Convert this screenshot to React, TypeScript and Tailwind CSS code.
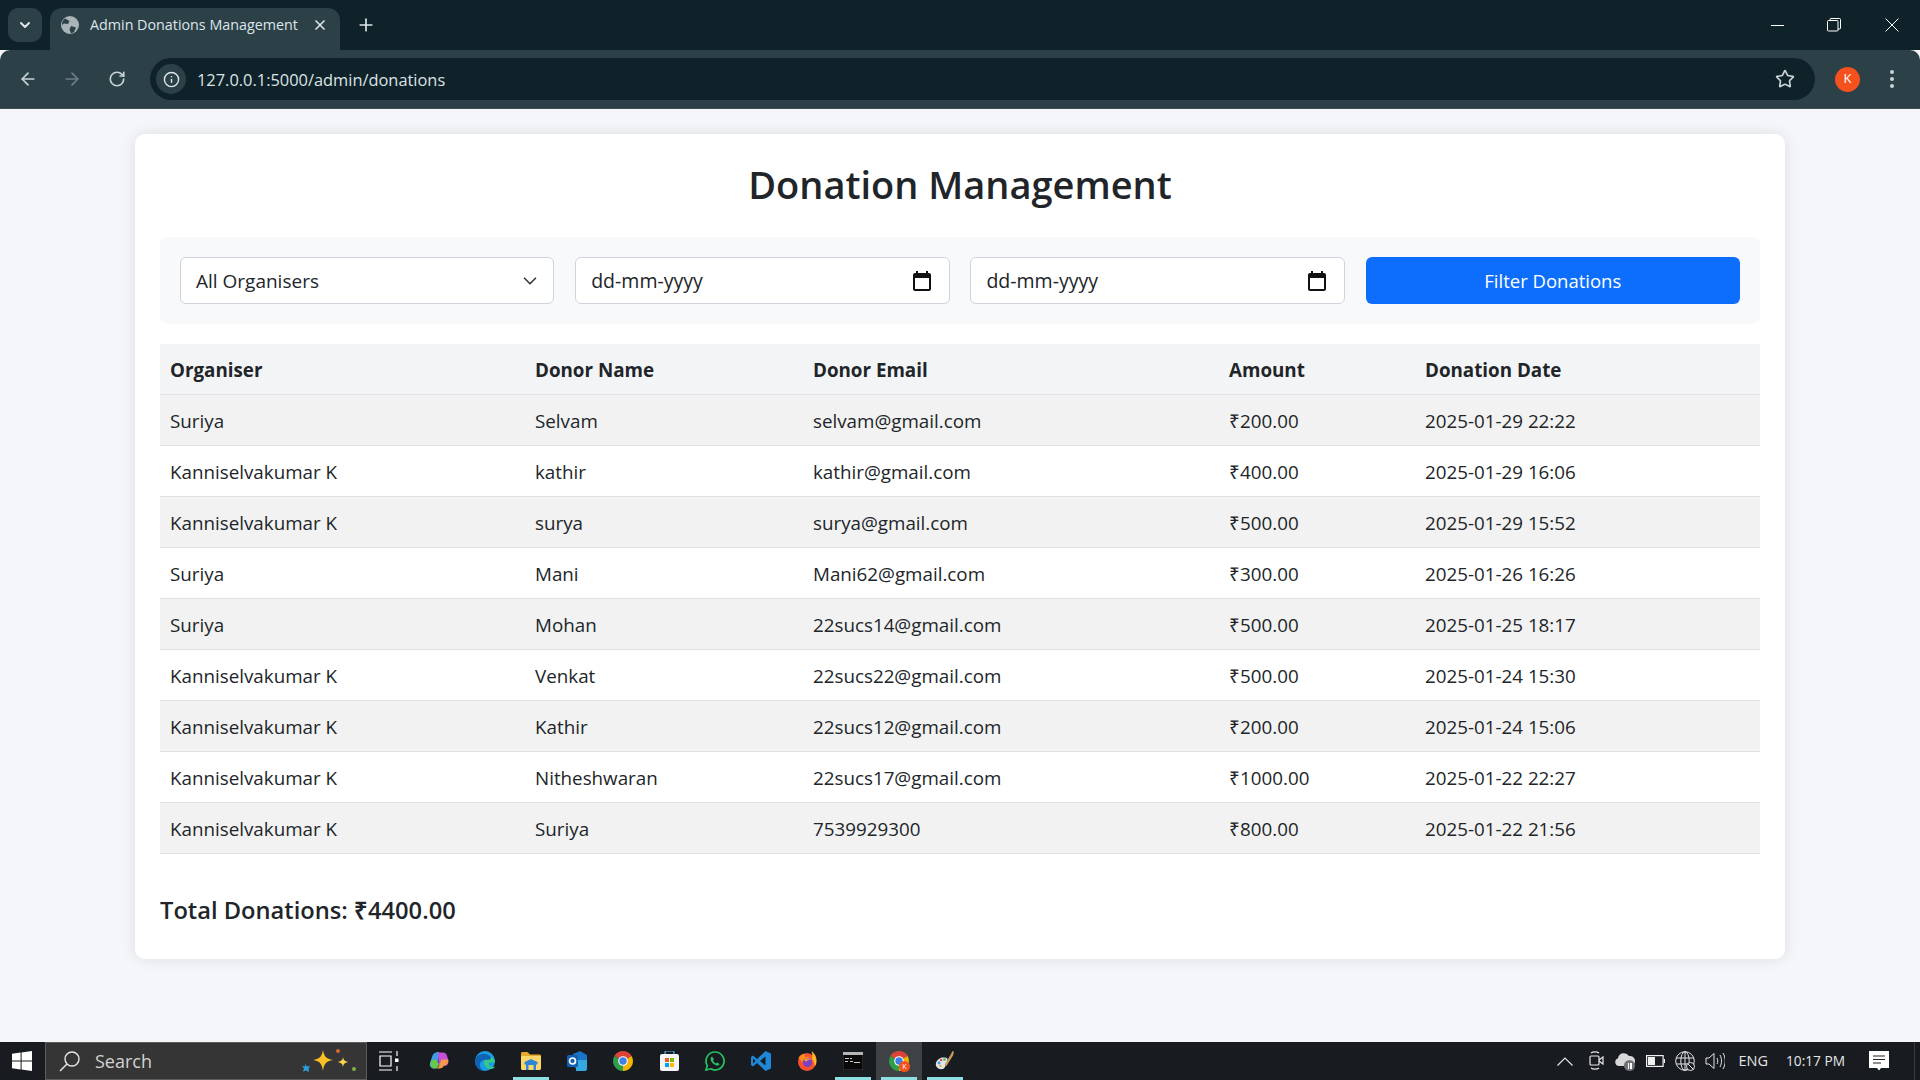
import { ArrowLeft, ArrowRight, ChevronDown, Info, Plus, RotateCw, Star, X } from 'lucide-react'

const donations = [
  ['Suriya', 'Selvam', 'selvam@gmail.com', '₹200.00', '2025-01-29 22:22'],
  ['Kanniselvakumar K', 'kathir', 'kathir@gmail.com', '₹400.00', '2025-01-29 16:06'],
  ['Kanniselvakumar K', 'surya', 'surya@gmail.com', '₹500.00', '2025-01-29 15:52'],
  ['Suriya', 'Mani', 'Mani62@gmail.com', '₹300.00', '2025-01-26 16:26'],
  ['Suriya', 'Mohan', '22sucs14@gmail.com', '₹500.00', '2025-01-25 18:17'],
  ['Kanniselvakumar K', 'Venkat', '22sucs22@gmail.com', '₹500.00', '2025-01-24 15:30'],
  ['Kanniselvakumar K', 'Kathir', '22sucs12@gmail.com', '₹200.00', '2025-01-24 15:06'],
  ['Kanniselvakumar K', 'Nitheshwaran', '22sucs17@gmail.com', '₹1000.00', '2025-01-22 22:27'],
  ['Kanniselvakumar K', 'Suriya', '7539929300', '₹800.00', '2025-01-22 21:56'],
]

function CalendarIcon() {
  return (
    <svg width="24" height="24" viewBox="0 0 24 24" fill="#111">
      <path d="M19 4h-1V2h-2v2H8V2H6v2H5C3.900 4 3 4.900 3 6v14c0 1.100.9 2 2 2h14c1.100 0 2-.9 2-2V6c0-1.100-.9-2-2-2zm0 16H5V9h14v11z" />
    </svg>
  )
}

function DateField() {
  return (
    <div className="h-[47px] flex items-center justify-between pl-[15px] pr-[15px] bg-white border border-[#ced4da] rounded-md text-[19.500px] text-[#212529]">
      <span>dd-mm-yyyy</span>
      <CalendarIcon />
    </div>
  )
}

function ChromeLogo() {
  return (
    <svg width="20" height="20" viewBox="0 0 20 20">
      <path d="M10 10 1.340 5A10 10 0 0 1 18.660 5z" fill="#dc4437" />
      <path d="M10 10 18.660 5A10 10 0 0 1 10 20z" fill="#f4b400" />
      <path d="M10 10V20A10 10 0 0 1 1.340 5z" fill="#2f9e48" />
      <circle cx="10" cy="10" r="4.800" fill="#fff" />
      <circle cx="10" cy="10" r="3.700" fill="#3f7fe8" />
    </svg>
  )
}

function TaskIcon({ active, open, children }: { active?: boolean; open?: boolean; children: React.ReactNode }) {
  return (
    <div className={`relative w-[46px] h-[38px] flex items-center justify-center ${active ? 'bg-[#3f4245]' : ''}`}>
      {children}
      {open && <div className="absolute bottom-0 left-[5px] right-[5px] h-[3px] bg-[#8fdfe2]" />}
    </div>
  )
}

export default function App() {
  return (
    <div className="h-screen flex flex-col overflow-hidden bg-[#f4f6fa] font-['Open_Sans',sans-serif] text-[#212529]">
      {/* browser chrome */}
      <div className="h-[50px] shrink-0 bg-[#0f2229] flex items-end">
        <div className="ml-[8px] mb-[8px] w-[34px] h-[34px] bg-[#2c4048] rounded-[10px] flex items-center justify-center">
          <ChevronDown size={16} strokeWidth={3} color="#dfe6e8" />
        </div>
        <div className="ml-[8px] w-[290px] h-[42px] bg-[#2c4048] rounded-t-[12px] flex items-center pl-[11px] pr-[12px] pb-[8px] text-[#dde5e8] text-[14.300px]">
          <svg width="18" height="18" viewBox="0 0 18 18" className="shrink-0">
            <circle cx="9" cy="9" r="9" fill="#a9b4b9" />
            <path d="M4 2.500 8.500 5 7 8 3 7.500 1 9a8 8 0 0 1 3-6.500zM10 10l5 1.500L13 16l-3 1.500-1.500-4z" fill="#2c4048" />
          </svg>
          <span className="ml-[11px] flex-1 whitespace-nowrap">Admin Donations Management</span>
          <X size={16} strokeWidth={2.500} color="#dfe6e8" />
        </div>
        <div className="ml-[16px] mb-[15px] w-[20px] h-[20px]">
          <Plus size={20} strokeWidth={2} color="#dfe6e8" />
        </div>
        <div className="ml-auto mb-[8px] h-[34px] flex items-center text-white">
          <div className="w-[13px] h-[1px] bg-white" />
          <svg width="14" height="14" viewBox="0 0 14 14" fill="none" stroke="#fff" className="ml-[43px]">
            <rect x="0.500" y="2.500" width="10.500" height="10.500" rx="1" />
            <path d="M3 2.500V1.500a1 1 0 0 1 1-1h8.500a1 1 0 0 1 1 1V10a1 1 0 0 1-1 1H11" />
          </svg>
          <svg width="14" height="14" viewBox="0 0 14 14" stroke="#fff" className="ml-[44px] mr-[21px]">
            <path d="M.5.500 13.500 13.500M13.500.500.5 13.500" />
          </svg>
        </div>
      </div>
      <div className="h-[59px] shrink-0 bg-[#2c4048] border-b border-[#3f4c52] rounded-t-[10px] flex items-center">
        <ArrowLeft size={20} strokeWidth={2} color="#c9d3d7" className="ml-[18px]" />
        <ArrowRight size={20} strokeWidth={2} color="#6f7f86" className="ml-[24px]" />
        <RotateCw size={18} strokeWidth={2.200} color="#c9d3d7" className="ml-[26px]" />
        <div className="ml-[24px] w-[1665px] h-[42px] bg-[#0f2229] rounded-full flex items-center pl-[6px]">
          <div className="w-[30px] h-[30px] rounded-full bg-[#2c4048] flex items-center justify-center">
            <Info size={17} strokeWidth={2} color="#dfe6e8" />
          </div>
          <span className="ml-[11px] mt-[3px] text-[16.400px] text-[#dbe3e6]">127.0.0.1:5000/admin/donations</span>
          <Star size={20} strokeWidth={2} color="#c9d3d7" className="ml-auto mr-[20px]" />
        </div>
        <div className="ml-[20px] w-[25px] h-[25px] rounded-full bg-[#f4511e] text-white text-[13px] flex items-center justify-center">K</div>
        <svg width="4" height="18" viewBox="0 0 4 18" fill="#c9d3d7" className="ml-[30px]">
          <circle cx="2" cy="2" r="2" />
          <circle cx="2" cy="9" r="2" />
          <circle cx="2" cy="16" r="2" />
        </svg>
      </div>

      {/* page */}
      <div className="flex-1 min-h-0 pt-[25px] px-[135px]">
        <div className="bg-white rounded-[10px] shadow-[0_0_15px_rgba(0,0,0,0.1)] h-[825px] p-[25px]">
          <h1 className="text-[38px] leading-[52px] font-semibold text-center mb-[27px] -mt-[1px]">Donation Management</h1>

          <div className="bg-[#f8f9fa] rounded-lg p-[20px] mt-[1px] grid grid-cols-4 gap-[20.800px]">
            <div className="h-[47px] flex items-center justify-between pl-[15px] pr-[12px] bg-white border border-[#ced4da] rounded-md text-[19px]">
              <span className="pt-[2px]">All Organisers</span>
              <ChevronDown size={22} strokeWidth={1.800} color="#343a40" />
            </div>
            <DateField />
            <DateField />
            <button className="h-[47px] bg-[#0d6efd] text-white rounded-md text-[18.500px]">Filter Donations</button>
          </div>

          <table className="w-full table-fixed mt-[20px] border-collapse text-[18.800px]">
            <colgroup>
              <col className="w-[365px]" />
              <col className="w-[278px]" />
              <col className="w-[416px]" />
              <col className="w-[196px]" />
              <col />
            </colgroup>
            <thead>
              <tr className="h-[50px] bg-[#f3f4f5] border-b border-[#dee2e6]">
                {['Organiser', 'Donor Name', 'Donor Email', 'Amount', 'Donation Date'].map((h) => (
                  <th key={h} className="px-[10px] pt-[2px] text-left font-bold">{h}</th>
                ))}
              </tr>
            </thead>
            <tbody>
              {donations.map((row, i) => (
                <tr key={i} className={`h-[51px] border-b border-[#dee2e6] ${i % 2 === 0 ? 'bg-[#f2f2f2]' : 'bg-white'}`}>
                  {row.map((cell, j) => (
                    <td key={j} className="px-[10px] pt-[3px] whitespace-nowrap">{cell}</td>
                  ))}
                </tr>
              ))}
            </tbody>
          </table>

          <h4 className="mt-[38px] text-[23.700px] leading-[36px] font-semibold">Total Donations: ₹4400.00</h4>
        </div>
      </div>

      {/* taskbar */}
      <div className="h-[38px] shrink-0 bg-[#181b1f] flex items-center text-[#e4e6e8]">
        <div className="w-[45px] h-full flex items-center justify-center pr-[2px]">
          <svg width="20" height="20" viewBox="0 0 20 20" fill="#fff">
            <path d="M0 2.800 8.600 1.600V9.500H0zM9.600 1.400 20 0V9.500H9.600zM0 10.500H8.600V18.400L0 17.200zM9.600 10.500H20V20L9.600 18.600z" />
          </svg>
        </div>
        <div className="w-[322px] h-full bg-[#353535] border border-[#5c5c5c] flex items-center pl-[13px]">
          <svg width="21" height="21" viewBox="0 0 21 21" fill="none" stroke="#e8e8e8" strokeWidth="1.400">
            <circle cx="13" cy="8" r="7" />
            <path d="M8 13 1 20" />
          </svg>
          <span className="ml-[15px] text-[18px] text-[#d2d2d2]">Search</span>
          <svg width="58" height="26" viewBox="0 0 58 26" className="ml-auto mr-[9px]">
            <path d="M24 2c1 6 3 9 10 10-7 1-9 4-10 11-1-7-3-10-10-11 7-1 9-4 10-10z" fill="#fbbf24" />
            <path d="M44 9c.5 3 1.500 4 5 5-3.500 1-4.500 2-5 5-.5-3-1.500-4-5-5 3.500-1 4.500-2 5-5z" fill="#fcd34d" />
            <path d="M6 16l2 2.500 3-.5-1.500 3 .5 3-3-1.500-3 1 1-3-2-2.500 3 .5z" fill="#2b9fe0" />
            <circle cx="39" cy="3" r="2" fill="#d9662e" />
            <circle cx="55" cy="21" r="2" fill="#7cb342" />
          </svg>
        </div>
        <div className="w-[49px] h-full flex items-center justify-center pr-[5px]">
          <svg width="20" height="20" viewBox="0 0 20 20" fill="none" stroke="#fff" strokeWidth="1.200">
            <path d="M0 1H13M0 19H13M1 5H12V15H1zM18 0V5M18 15V20" />
            <rect x="16" y="7.500" width="3.500" height="3.500" fill="#fff" stroke="none" />
          </svg>
        </div>
        <TaskIcon>
          <svg width="20" height="20" viewBox="0 0 20 20">
            <path d="M7 1.500c1.200-.8 3-.6 3.500.6L9 9l-2.500 8.500H5C1.800 17.500.2 14.800 1 12L3.500 4.500C4 3 5.500 1.800 7 1.500z" fill="#3f9be8" />
            <path d="M2 10c1-1.500 4-2 5.500-1L10 13c-.4 2.500-1.500 4.500-4 4.500H5C2 17.500 .5 13 2 10z" fill="#63c94f" />
            <path d="M9 1.500h5c2.200 0 3.500 1.400 4 3.200L19.300 9c.8 3-1 6-4 6H13c-2.500 0-3.500-1.500-3.500-3.500z" fill="#c94fd6" />
            <path d="M12.500 8.500h6.500c.9 3-1 6-4 6-.8 2-2.300 3-4.500 3H6c2.500 0 4-1.500 4.500-4z" fill="#f39a4a" />
          </svg>
        </TaskIcon>
        <TaskIcon>
          <svg width="20" height="20" viewBox="0 0 20 20">
            <circle cx="10" cy="10" r="10" fill="#1b9de2" />
            <path d="M20 11c0-3-2.500-5-5.500-5C11 6 9 8 9 11.500c0 3.500 3 6.500 7 6.500 1.500 0 3-.7 4-2.500-3 1.200-6.500 0-6.500-2.500 0-1 .8-1.500 2.500-1.500 2 0 4 .5 4-.5z" fill="#35c98c" />
            <path d="M1 6.500c3-5 11.500-5 14.500-.8 1 1.500 0 3-2 3-4 0-7.500.3-8.500 4-.7 3 1 6 4 7.300-5 0-9-4.500-9-10 0-1.200.6-2.500 1-3.500z" fill="#0f62b4" />
          </svg>
        </TaskIcon>
        <TaskIcon open>
          <svg width="20" height="18" viewBox="0 0 20 18">
            <path d="M0 1.500C0 .7.700 0 1.500 0h5L9 2.500h9.500c.8 0 1.500.7 1.500 1.500v1H0z" fill="#e6a92a" />
            <path d="M0 4h20v12.500c0 .8-.7 1.500-1.500 1.500h-17C.7 18 0 17.300 0 16.500z" fill="#fbd76b" />
            <path d="M3.500 10 10 7l6.500 3v2.500H15V18H5v-5.500H3.500z" fill="#2f86d6" />
            <rect x="7.500" y="13" width="5" height="5" fill="#fbd76b" />
          </svg>
        </TaskIcon>
        <TaskIcon>
          <svg width="20" height="20" viewBox="0 0 20 20">
            <path d="M6 3 13 0l7 4v11c0 1-1 2-2 2H8z" fill="#1a75c9" />
            <path d="M9 9h11v9c0 1-1 2-2 2H9z" fill="#35a8e0" />
            <rect x="0" y="4" width="11" height="12" rx="1.500" fill="#0f5fb3" />
            <circle cx="5.500" cy="10" r="3" fill="none" stroke="#fff" strokeWidth="1.700" />
          </svg>
        </TaskIcon>
        <TaskIcon><ChromeLogo /></TaskIcon>
        <TaskIcon>
          <svg width="19" height="20" viewBox="0 0 19 20">
            <path d="M5 4V1.500C5 .700 5.700 0 6.500 0h6c.8 0 1.500.7 1.500 1.500V4" fill="none" stroke="#4db6e8" strokeWidth="1.200" />
            <rect y="3" width="19" height="17" rx="2" fill="#f5f5f5" />
            <rect x="5" y="7" width="4" height="4" fill="#ef5b2b" />
            <rect x="10" y="7" width="4" height="4" fill="#7fba00" />
            <rect x="5" y="12" width="4" height="4" fill="#00a4ef" />
            <rect x="10" y="12" width="4" height="4" fill="#ffb900" />
          </svg>
        </TaskIcon>
        <TaskIcon>
          <svg width="20" height="20" viewBox="0 0 20 20" fill="none">
            <path d="M10 1a9 9 0 0 0-7.700 13.600L1 19l4.600-1.200A9 9 0 1 0 10 1z" stroke="#25c262" strokeWidth="1.700" />
            <path d="M7 5.500c-1 .4-1.500 1.500-1.300 3 .4 2.500 3 5.200 5.800 6 1.500.3 2.600-.3 3-1.500l-2.300-1.600-1.200 1c-1.300-.5-2.500-1.800-3-3l1-1.200z" fill="#25c262" />
          </svg>
        </TaskIcon>
        <TaskIcon>
          <svg width="20" height="20" viewBox="0 0 20 20">
            <path d="M14.500 0 20 2.500v15L14.500 20 6 12l-4 3.500L0 14v-8l2-1.500L6 8z" fill="#1e88d8" />
            <path d="M14.500 5.500 9 10l5.500 4.500z" fill="#181b1f" />
            <path d="M2 7.500 4.500 10 2 12.500z" fill="#181b1f" />
          </svg>
        </TaskIcon>
        <TaskIcon>
          <svg width="20" height="20" viewBox="0 0 20 20">
            <circle cx="10" cy="11" r="9" fill="#f4512c" />
            <path d="M14.500 0c3.500 2.500 5.500 6.500 5 11-.3 2-1 3.500-2 5 .3-3-.5-6-2.500-8C15.500 5 15.500 2.500 14.500 0z" fill="#fdb52e" />
            <path d="M1.500 7C3 4 5.500 2.500 8 3c-.5 1-.5 2 0 3 2-.5 5 0 7 2.500-3-1-6 .5-6 3.500-2 0-5-2-7.500-5z" fill="#fa8c22" />
            <circle cx="10.500" cy="11.500" r="4.500" fill="#7a3fc4" />
            <path d="M7 8.500c2-1.500 5-1.500 7 .5-2-.5-4 0-5 2z" fill="#f9a03a" />
          </svg>
        </TaskIcon>
        <TaskIcon open>
          <svg width="20" height="18" viewBox="0 0 20 18">
            <rect width="20" height="18" rx="1" fill="#0a0a0a" stroke="#777" strokeWidth=".5" />
            <rect width="20" height="3" fill="#b5b5b5" />
            <path d="M2 6h4v1H2zM7 6h2v1H7zM2 9h3v1H2zM7 9h3v1H7zM11 10h6v1h-6z" fill="#ccc" />
          </svg>
        </TaskIcon>
        <TaskIcon active open>
          <div className="relative">
            <ChromeLogo />
            <div className="absolute -right-[1px] -bottom-[1px] w-[11px] h-[11px] rounded-full bg-[#f4511e] text-white text-[7px] leading-[11px] text-center">K</div>
          </div>
        </TaskIcon>
        <TaskIcon open>
          <svg width="20" height="20" viewBox="0 0 20 20">
            <path d="M1 12C2 8 6 6 10 6.500c2 .2 3 1.500 2.500 3L10 16c-1 2-3 2.500-5 2-3-.7-4.800-3-4-6z" fill="#dfe6ea" />
            <circle cx="4" cy="12" r="1.400" fill="#3a9ad9" />
            <circle cx="6" cy="9" r="1.300" fill="#e05252" />
            <circle cx="9.500" cy="8.500" r="1.300" fill="#4caf50" />
            <circle cx="5.500" cy="15" r="1.300" fill="#f2b632" />
            <path d="M9.500 14 16 3l1.500-3 1.500 1-1 3.500L11.500 15z" fill="#c89b5a" />
          </svg>
        </TaskIcon>

        <div className="ml-auto flex items-center h-full">
          <svg width="16" height="9" viewBox="0 0 16 9" fill="none" stroke="#e4e6e8" strokeWidth="1.200" className="mr-[16px]">
            <path d="M.5 8.500 8 1l7.500 7.500" />
          </svg>
          <svg width="15" height="20" viewBox="0 0 15 20" fill="none" stroke="#e4e6e8" strokeWidth="1.200" className="mr-[11px]">
            <rect x="1" y="5" width="9" height="9" rx="1" />
            <path d="M10 9l4-3v7l-4-3M2 2c2-1.500 6-1.500 8 0M2 17c2 1.500 6 1.500 8 0" />
          </svg>
          <div className="relative w-[20px] h-[20px] mr-[11px]">
            <svg width="20" height="14" viewBox="0 0 20 14" fill="#d8d8d8" className="mt-[1px]">
              <path d="M4 14a4 4 0 0 1-1-7.800A6 6 0 0 1 14 4a5 5 0 0 1 2 10z" />
            </svg>
            <div className="absolute right-0 bottom-0 w-[11px] h-[11px] rounded-full bg-[#6f7378] flex items-center justify-center gap-[1px]">
              <div className="w-[1.500px] h-[6px] bg-white" />
              <div className="w-[1.500px] h-[6px] bg-white" />
            </div>
          </div>
          <svg width="19" height="12" viewBox="0 0 19 12" fill="none" stroke="#f0f0f0" strokeWidth="1.200" className="mr-[10px]">
            <rect x=".6" y=".6" width="16.500" height="10.800" />
            <rect x="2" y="2" width="7" height="8" fill="#f0f0f0" stroke="none" />
            <path d="M18.400 4v4" />
          </svg>
          <svg width="20" height="20" viewBox="0 0 20 20" fill="none" stroke="#e4e6e8" strokeWidth="1" className="mr-[10px]">
            <circle cx="10" cy="10" r="9.300" />
            <ellipse cx="10" cy="10" rx="4.200" ry="9.300" />
            <path d="M1 7h18M1 13h18M10 .7v18.600" />
            <circle cx="15.500" cy="15.500" r="4" fill="#181b1f" stroke="#e4e6e8" />
            <path d="M13 13l5 5" />
          </svg>
          <svg width="20" height="18" viewBox="0 0 20 18" fill="none" stroke="#e4e6e8" strokeWidth="1" className="mr-[13px]">
            <path d="M1 6h3l5-4.500v15L4 12H1zM12 6c1 2 1 4 0 6M15 3c2 4 2 8 0 12M18 1c3 5 3 11 0 16" />
          </svg>
          <span className="text-[14.500px] mr-[18px]">ENG</span>
          <span className="text-[13.700px] mr-[24px] whitespace-nowrap">10:17 PM</span>
          <svg width="20" height="20" viewBox="0 0 20 20" className="mr-[25px]">
            <path d="M0 0h20v17h-8l-2 2.500L8 17H0z" fill="#fff" />
            <path d="M4 5h12M4 8.500h12M4 12h8" stroke="#222" strokeWidth="1" />
          </svg>
          <div className="w-[1px] h-full bg-[#3a3d40] mr-[5px]" />
        </div>
      </div>
    </div>
  )
}
